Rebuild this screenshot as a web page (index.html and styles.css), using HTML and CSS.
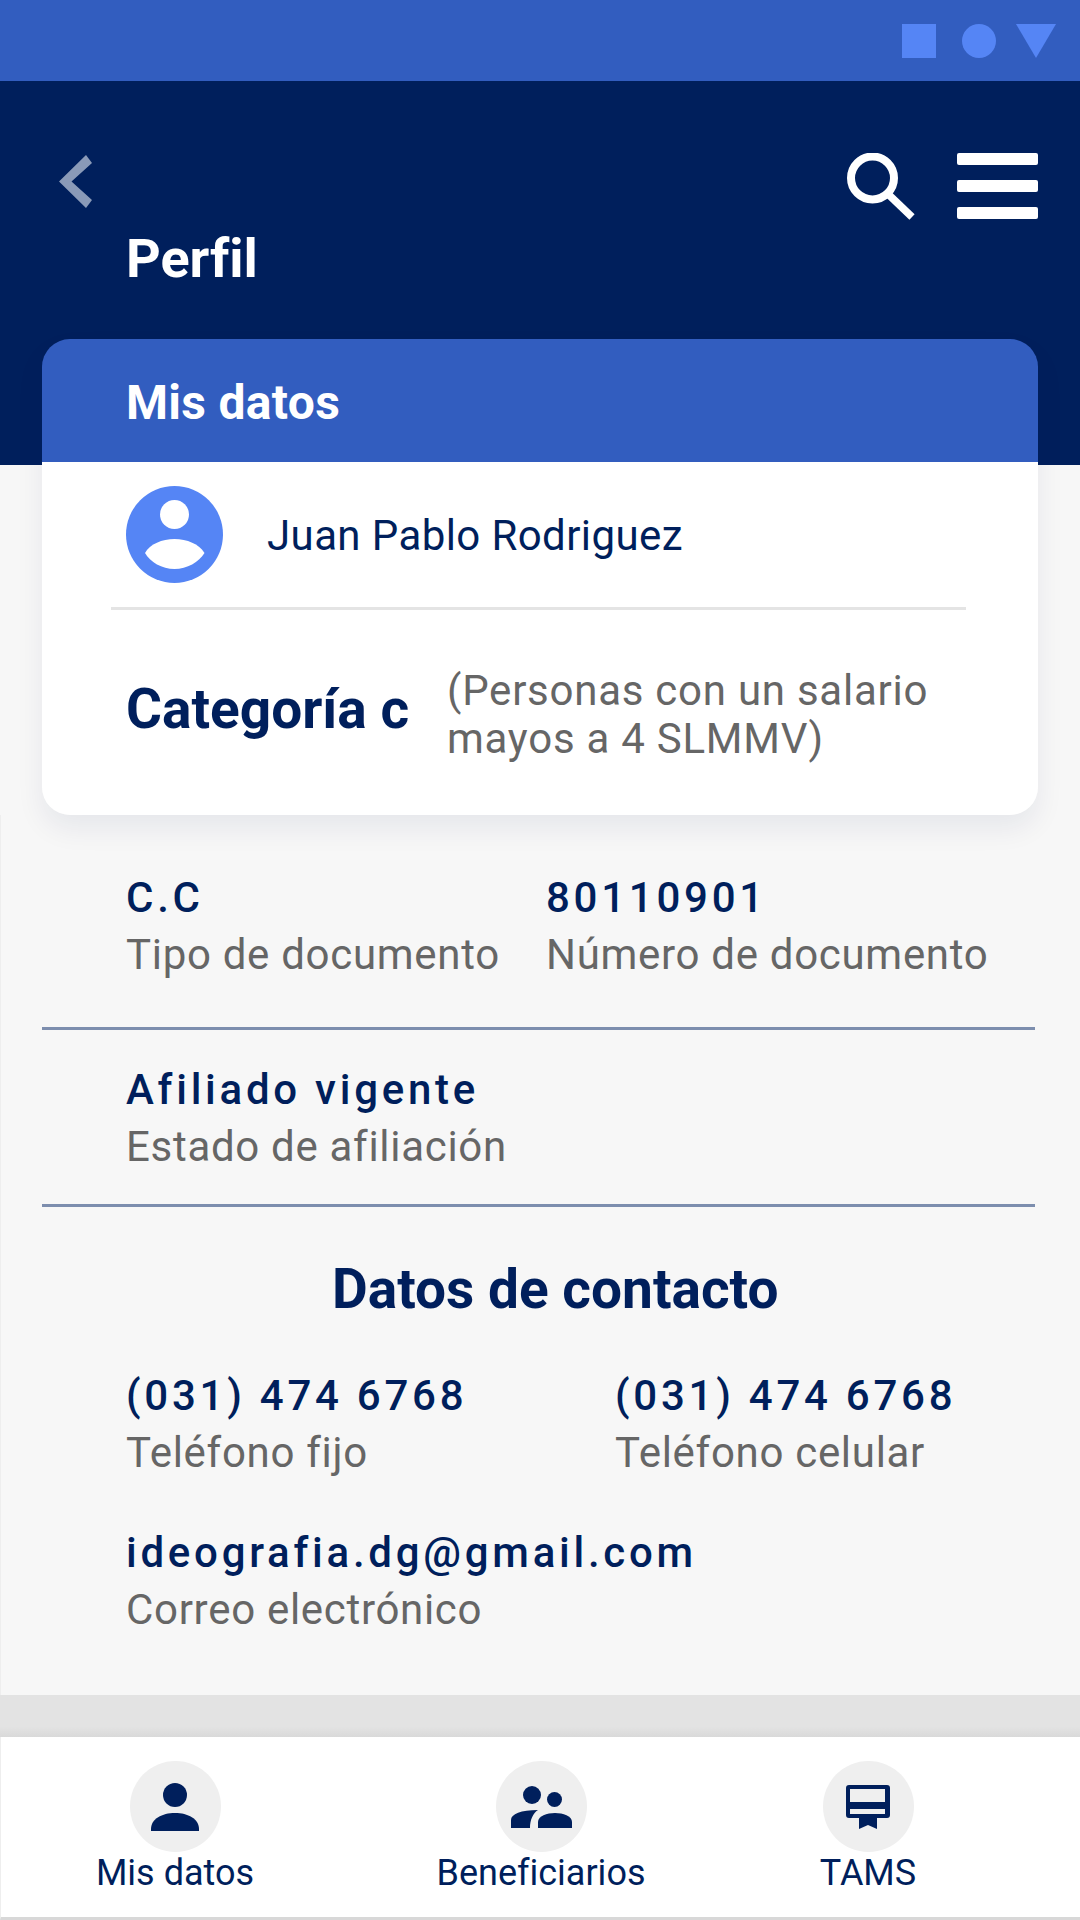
FILE: index.html
```html
<!DOCTYPE html>
<html lang="es">
<head>
  <meta charset="UTF-8" />
  <title>Perfil</title>
  <link rel="stylesheet" href="styles.css">
</head>
<body>
  <div class="screen">
    <div class="statusbar">
      <span class="st-square"></span>
      <span class="st-circle"></span>
      <svg class="st-tri" width="40" height="34" viewBox="0 0 40 34"><path d="M0 0H40L20 34Z" fill="#5585f5"/></svg>
    </div>

    <header class="topbar">
      <div class="topbar-row">
        <svg class="back" width="33" height="53" viewBox="0 0 33 53"><path d="M27 0L33 8L12.500 26.500L33 45L27 53L0 26.500Z" fill="#8a9ab8"/></svg>
        <svg class="search" width="68" height="67" viewBox="0 0 68 67"><circle cx="25.500" cy="25" r="21.500" fill="none" stroke="#fff" stroke-width="8"/><path d="M41 41L65 64" stroke="#fff" stroke-width="7.500"/></svg>
        <div class="burger"><span></span><span></span><span></span></div>
      </div>
      <h1>Perfil</h1>
    </header>

    <section class="card">
      <div class="card-head">Mis datos</div>
      <div class="user">
        <svg width="97" height="97" viewBox="0 0 97 97">
          <circle cx="48.500" cy="48.500" r="48.500" fill="#5585f5"/>
          <circle cx="48.500" cy="28.500" r="14.500" fill="#fff"/>
          <path d="M19 67C24 58 36 53 48.500 53C61 53 73 58 78.500 67C73 76 61 83 48.500 83C36 83 24 76 19 67Z" fill="#fff"/>
        </svg>
        <span class="user-name">Juan Pablo Rodriguez</span>
      </div>
      <div class="category">
        <span class="cat-name">Categoría c</span>
        <span class="cat-note">(Personas con un salario<br>mayos a 4 SLMMV)</span>
      </div>
    </section>

    <main class="details">
      <div class="block block-doc">
        <div class="field field-doc-type">
          <div class="value">C.C</div>
          <div class="label">Tipo de documento</div>
        </div>
        <div class="field">
          <div class="value">80110901</div>
          <div class="label">Número de documento</div>
        </div>
      </div>
      <div class="block block-state">
        <div class="field">
          <div class="value">Afiliado vigente</div>
          <div class="label">Estado de afiliación</div>
        </div>
      </div>
      <div class="contact">
        <h2>Datos de contacto</h2>
        <div class="phones">
          <div class="field field-phone">
            <div class="value">(031) 474 6768</div>
            <div class="label">Teléfono fijo</div>
          </div>
          <div class="field">
            <div class="value">(031) 474 6768</div>
            <div class="label">Teléfono celular</div>
          </div>
        </div>
        <div class="field">
          <div class="value">ideografia.dg@gmail.com</div>
          <div class="label">Correo electrónico</div>
        </div>
      </div>
    </main>

    <div class="band"></div>

    <nav class="tabs">
      <div class="tab tab-1">
        <span class="tab-icon">
          <svg width="50" height="48" viewBox="0 0 50 48" fill="#001f5c">
            <circle cx="25" cy="12" r="12"/>
            <path d="M1 48V46C1 36 12 30 25 30C38 30 49 36 49 46V48Z"/>
          </svg>
        </span>
        <span class="tab-label">Mis datos</span>
      </div>
      <div class="tab tab-2">
        <span class="tab-icon">
          <svg width="61" height="42" viewBox="0 0 61 42" fill="#001f5c">
            <circle cx="21" cy="9" r="9"/>
            <circle cx="43.500" cy="13.500" r="7.500"/>
            <path d="M0 42V34C0 28 10 24 27 24C22 27 19 34 19 42Z"/>
            <path d="M27 42V36C27 30 36 27 44 27C52 27 61 30 61 36V42Z"/>
          </svg>
        </span>
        <span class="tab-label">Beneficiarios</span>
      </div>
      <div class="tab tab-3">
        <span class="tab-icon">
          <svg width="44" height="44" viewBox="0 0 44 44" fill="#001f5c">
            <path d="M3 0H41A3 3 0 0 1 44 3V30A3 3 0 0 1 41 33H31V44L22 40L13 44V33H3A3 3 0 0 1 0 30V3A3 3 0 0 1 3 0Z"/>
            <rect x="4" y="4" width="35" height="13" fill="#efefef"/>
            <rect x="4" y="24" width="35" height="5" fill="#efefef"/>
          </svg>
        </span>
        <span class="tab-label">TAMS</span>
      </div>
    </nav>
  </div>
</body>
</html>
```

FILE: styles.css
```css
* {
  box-sizing: border-box;
}

html, body {
  margin: 0;
  padding: 0;
}

body {
  font-family: 'Roboto', sans-serif;
  font-variant-ligatures: none;
  background-color: #f7f7f7;
}

.screen {
  width: 1080px;
  height: 1920px;
  display: flex;
  flex-direction: column;
  overflow: hidden;
  background-color: #f7f7f7;
}

.statusbar {
  height: 81px;
  flex-shrink: 0;
  background-color: #325dbf;
  display: flex;
  align-items: center;
  justify-content: flex-end;
  padding: 0 24px 0 0;
}

.st-square {
  width: 34px;
  height: 34px;
  background-color: #5585f5;
}

.st-circle {
  width: 34px;
  height: 34px;
  margin: 0 20px 0 26px;
  border-radius: 50%;
  background-color: #5585f5;
}

.topbar {
  height: 384px;
  flex-shrink: 0;
  background-color: #001f5c;
  padding: 72px 42px 0 0;
}

.topbar-row {
  display: flex;
  align-items: flex-start;
}

.back {
  margin: 2px 0 0 59px;
}

.search {
  margin-left: auto;
}

.burger {
  width: 81px;
  margin-left: 42px;
  display: flex;
  flex-direction: column;
  gap: 15px;
}

.burger span {
  height: 12px;
  border-radius: 2px;
  background-color: #fff;
}

h1 {
  margin: 9px 0 0 126px;
  color: #fff;
  font-size: 54px;
  line-height: 60px;
  font-weight: 700;
}

.card {
  width: 996px;
  height: 476px;
  margin: -126px 0 0 42px;
  border-radius: 28px;
  background: linear-gradient(#325dbf 0 123px, #fff 123px);
  box-shadow: 0 14px 28px rgba(0, 31, 92, 0.07);
  flex-shrink: 0;
}

.card-head {
  height: 123px;
  padding: 2px 0 0 84px;
  color: #fff;
  font-size: 48px;
  font-weight: 700;
  line-height: 123px;
  letter-spacing: 0.3px;
}

.user {
  height: 148px;
  margin: 0 72px 0 69px;
  padding: 24px 0 0 15px;
  display: flex;
  align-items: flex-start;
  gap: 44px;
  border-bottom: 3px solid #e4e4e4;
}

.user-name {
  margin-top: 26px;
  color: #001f5c;
  font-size: 42px;
  line-height: 48px;
  letter-spacing: 0.4px;
}

.category {
  display: flex;
  align-items: center;
  padding: 57px 0 0 84px;
}

.cat-name {
  width: 321px;
  flex-shrink: 0;
  margin-top: -12px;
  color: #001f5c;
  font-size: 55px;
  font-weight: 700;
}

.cat-note {
  color: #666;
  font-size: 42px;
  line-height: 48px;
  letter-spacing: 0.75px;
}

.details {
  padding: 0 0 0 125px;
  flex-grow: 1;
  border-left: 1px solid #eee;
}

.block {
  margin: 0 45px 0 -84px;
  padding: 0 0 0 84px;
  border-bottom: 3px solid #7d8eae;
}

.block-doc {
  height: 215px;
  padding-top: 59px;
  display: flex;
}

.block-state {
  height: 177px;
  padding-top: 36px;
}

.field-doc-type {
  width: 420px;
}

.value {
  color: #001f5c;
  font-size: 42px;
  font-weight: 500;
  line-height: 48px;
  letter-spacing: 3.75px;
}

.label {
  margin-top: 9px;
  color: #666;
  font-size: 42px;
  line-height: 48px;
  letter-spacing: 0.7px;
}

.contact {
  padding-top: 49px;
}

h2 {
  margin: 0 0 50px 206px;
  color: #001f5c;
  font-size: 55px;
  line-height: 66px;
  font-weight: 700;
}

.phones {
  display: flex;
  margin-bottom: 52px;
}

.field-phone {
  width: 489px;
}

.band {
  height: 42px;
  flex-shrink: 0;
  background: linear-gradient(#e3e3e3 75%, #d9d9d9);
}

.tabs {
  height: 183px;
  flex-shrink: 0;
  position: relative;
  display: flex;
  background-color: #fff;
  border-left: 1px solid #eee;
  border-bottom: 3px solid #d8d8d8;
}

.tab {
  display: flex;
  flex-direction: column;
  align-items: center;
  padding-top: 24px;
  position: absolute;
  top: 0;
  width: 300px;
  color: #001f5c;
}

.tab-1 { left: 24px; }
.tab-2 { left: 390px; }
.tab-3 { left: 717px; }

.tab-icon {
  width: 91px;
  height: 91px;
  border-radius: 50%;
  background-color: #efefef;
  display: flex;
  align-items: center;
  justify-content: center;
}

.tab-label {
  margin-top: -1px;
  font-size: 36px;
  line-height: 44px;
}
```
